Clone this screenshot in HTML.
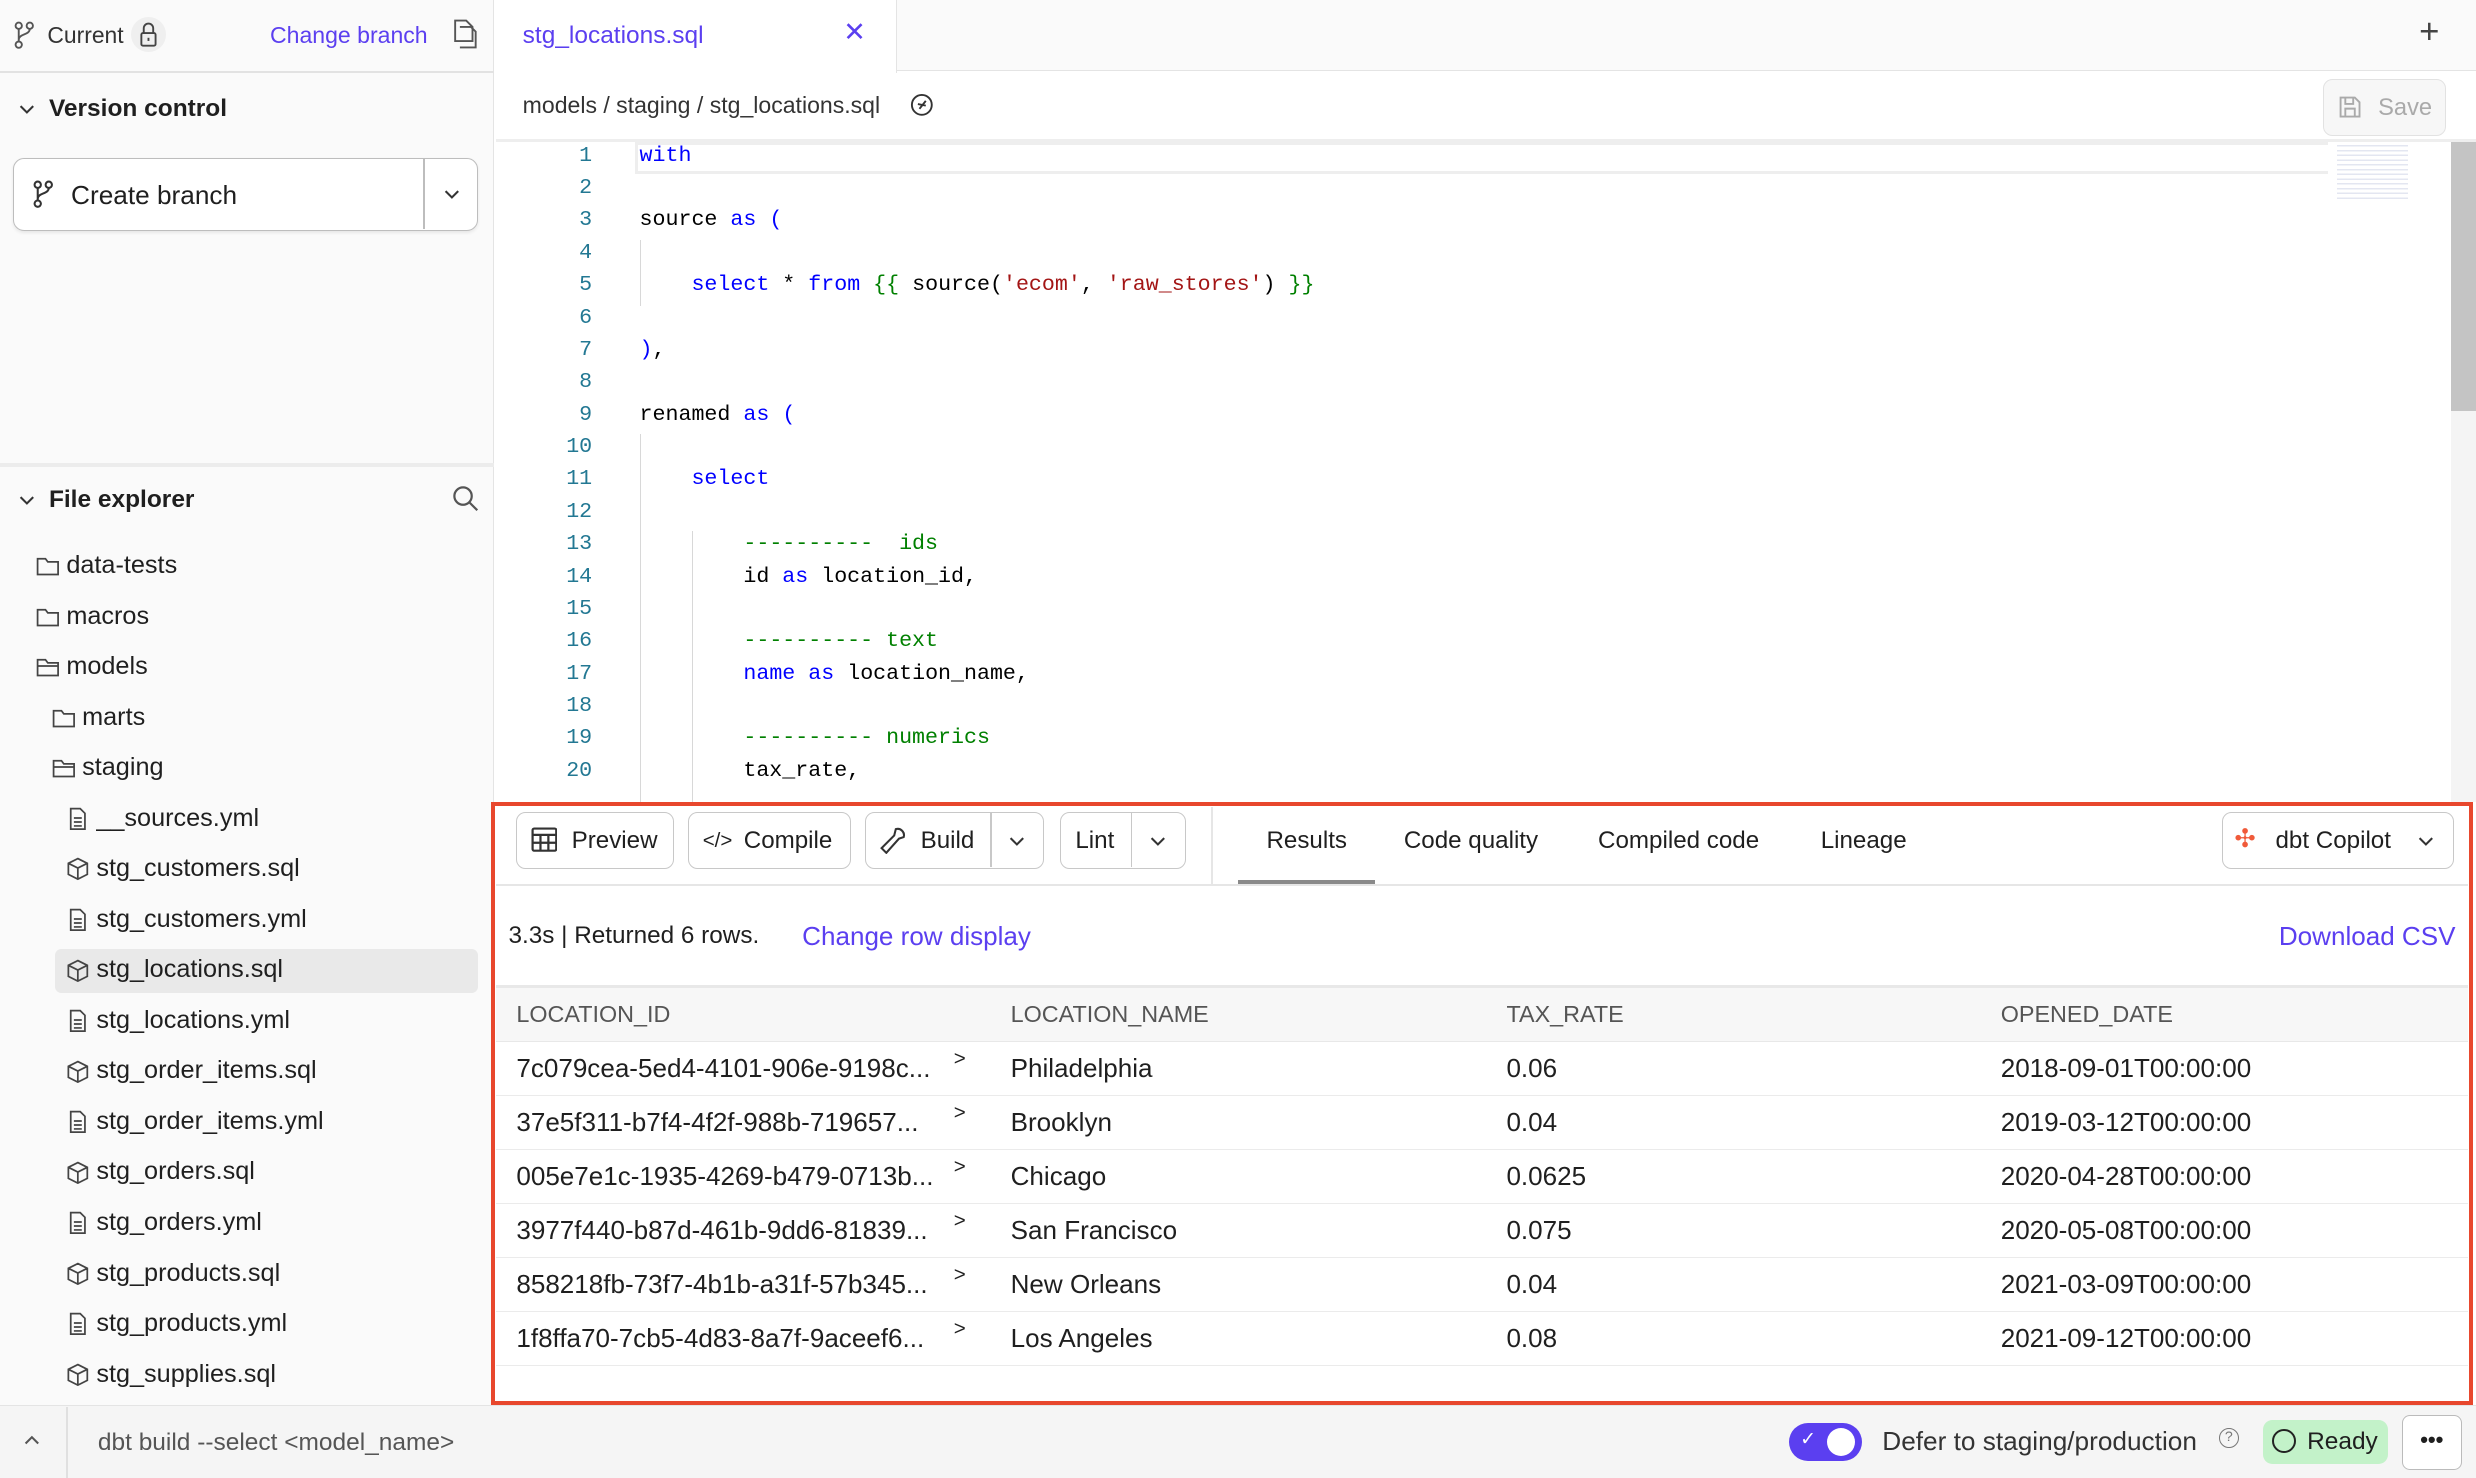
<!DOCTYPE html>
<html><head><meta charset="utf-8"><style>
*{box-sizing:border-box;margin:0;padding:0}
html,body{width:2476px;height:1478px;overflow:hidden;background:#fff}
#w{zoom:1.5791;width:1568px;height:936px;position:relative;font-family:"Liberation Sans",sans-serif;color:#1f1f1f;font-size:14px}
.a{position:absolute;white-space:nowrap}
.p{color:#5b3ff0}
.ln{position:absolute;width:375px;text-align:right;left:0;color:#237893;font-family:"Liberation Mono",monospace;font-size:13.7px}
.cd{position:absolute;left:405px;font-family:"Liberation Mono",monospace;font-size:13.7px;white-space:pre;color:#000}
.k{color:#0000ff}.s{color:#a31515}.c{color:#008000}
.btn{position:absolute;border:1px solid #c8c8c8;border-radius:6px;background:#fff;height:36px;top:514px}
.ti{position:absolute;font-size:15.3px;white-space:nowrap}
.row{position:absolute;left:314px;width:1249px;height:34px;border-bottom:1px solid #ebebeb}
.row span{position:absolute;top:7px;font-size:16.5px;white-space:nowrap}
</style></head><body><div id="w">
<div class="a" style="left:0;top:0;width:313px;height:890px;background:#fafafa;border-right:1px solid #e4e4e4"></div>
<div class="a" style="left:0;top:45px;width:313px;height:1px;background:#e2e2e2"></div>
<svg class="a" style="left:9px;top:13px" width="14" height="18" viewBox="0 0 14 18" fill="none" stroke="#555" stroke-width="1.2"><circle cx="3" cy="3" r="2"/><circle cx="10" cy="3" r="2"/><circle cx="3" cy="15" r="2"/><path d="M3 5v8M10 5c0 4-7 3-7 7"/></svg>
<div class="a" style="left:30px;top:14px;font-size:14.5px;color:#333">Current</div>
<div class="a" style="left:83px;top:11px;width:22px;height:22px;border-radius:11px;background:#efefef"></div>
<svg class="a" style="left:88px;top:14px" width="12" height="16" viewBox="0 0 12 16" fill="none" stroke="#444" stroke-width="1.2"><path d="M3 7V4a3 3 0 0 1 6 0v3"/><rect x="1.5" y="7" width="9" height="8" rx="1"/><path d="M6 10v2"/></svg>
<div class="a p" style="left:171px;top:14px;font-size:14.6px">Change branch</div>
<svg class="a" style="left:286px;top:12px" width="16" height="19" viewBox="0 0 16 19" fill="none" stroke="#555" stroke-width="1.2"><path d="M2 1h7l4 4v9H2z"/><path d="M5 5h7l3 3v10H5"/></svg>
<svg class="a" style="left:12px;top:65px" width="10" height="8" viewBox="0 0 10 8" fill="none" stroke="#333" stroke-width="1.3"><path d="M1 2l4 4 4-4"/></svg>
<div class="a" style="left:31px;top:60px;font-size:15.5px;font-weight:bold">Version control</div>
<div class="a" style="left:8px;top:100px;width:295px;height:46px;border:1px solid #bdbdbd;border-radius:7px;background:#fff;box-shadow:0 1px 2px rgba(0,0,0,.08)"></div>
<div class="a" style="left:268px;top:101px;width:1px;height:44px;background:#bdbdbd"></div>
<svg class="a" style="left:21px;top:114px" width="14" height="18" viewBox="0 0 14 18" fill="none" stroke="#333" stroke-width="1.3"><circle cx="3" cy="3" r="2"/><circle cx="10" cy="3" r="2"/><circle cx="3" cy="15" r="2"/><path d="M3 5v8M10 5c0 4-7 3-7 7"/></svg>
<div class="a" style="left:45px;top:114px;font-size:16.6px">Create branch</div>
<svg class="a" style="left:281px;top:119px" width="10" height="8" viewBox="0 0 10 8" fill="none" stroke="#333" stroke-width="1.3"><path d="M1 2l4 4 4-4"/></svg>
<div class="a" style="left:0;top:293px;width:313px;height:3px;background:#ececec"></div>
<svg class="a" style="left:12px;top:313px" width="10" height="8" viewBox="0 0 10 8" fill="none" stroke="#333" stroke-width="1.3"><path d="M1 2l4 4 4-4"/></svg>
<div class="a" style="left:31px;top:308px;font-size:15.5px;font-weight:bold">File explorer</div>
<svg class="a" style="left:286px;top:307px" width="17" height="17" viewBox="0 0 17 17" fill="none" stroke="#555" stroke-width="1.4"><circle cx="7" cy="7" r="5.5"/><path d="M11 11l5 5"/></svg>
<div class="a" style="left:35px;top:601px;width:268px;height:28px;background:#e9e9e9;border-radius:4px"></div>
<div id="tree"></div>
<div class="a" style="left:314px;top:0;width:1254px;height:45px;background:#fafafa;border-bottom:1px solid #e4e4e4"></div>
<div class="a" style="left:314px;top:0;width:254px;height:46px;background:#fff;border-right:1px solid #e4e4e4"></div>
<div class="a p" style="left:331px;top:14px;font-size:15.5px">stg_locations.sql</div>
<div class="a p" style="left:534px;top:11px;font-size:17px">✕</div>
<div class="a" style="left:1532px;top:8px;font-size:22px;color:#444">+</div>
<div class="a" style="left:331px;top:58px;font-size:14.6px;color:#333">models / staging / stg_locations.sql</div>
<svg class="a" style="left:576px;top:59px" width="15" height="15" viewBox="0 0 15 15" fill="none" stroke="#333" stroke-width="1.2"><circle cx="7.5" cy="7.5" r="6.3"/><path d="M10 5l-4 5M5 7l5 1"/></svg>
<div class="a" style="left:1471px;top:50px;width:78px;height:36px;border:1px solid #e2e2e2;border-radius:6px;background:#f7f7f7"></div>
<svg class="a" style="left:1481px;top:61px" width="14" height="14" viewBox="0 0 14 14" fill="none" stroke="#aaa" stroke-width="1.2"><path d="M1 1h9l3 3v9H1z"/><path d="M4 1v4h5V1M4 13V8h6v5"/></svg>
<div class="a" style="left:1506px;top:60px;font-size:15px;color:#aaa">Save</div>
<div class="a" style="left:314px;top:88px;width:1254px;height:2px;background:#eee"></div>
<div class="a" style="left:402px;top:90px;width:1072px;height:20px;border:2px solid #eee;border-right:none"></div>
<div class="a" style="left:1480px;top:90px;width:45px;height:38px;background:repeating-linear-gradient(#fff 0 2px,#d0d6e8 2px 3px);opacity:.6"></div>
<div class="a" style="left:1552px;top:90px;width:16px;height:418px;background:#f4f4f4"></div>
<div class="a" style="left:1552px;top:90px;width:16px;height:170px;background:#c4c4c4"></div>
<div class="a" style="left:405px;top:152px;width:1px;height:42px;background:#d8d8d8"></div>
<div class="a" style="left:405px;top:275px;width:1px;height:233px;background:#d8d8d8"></div>
<div class="a" style="left:438px;top:336px;width:1px;height:172px;background:#d8d8d8"></div>
<div id="code"></div>
<div class="a" style="left:311px;top:508px;width:1255px;height:382px;border:3px solid #e8472d;background:#fff"></div>
<div class="btn" style="left:327px;width:100px"></div>
<svg class="a" style="left:336px;top:524px" width="17" height="16" viewBox="0 0 17 16" fill="none" stroke="#333" stroke-width="1.4"><rect x="1" y="1" width="15" height="14" rx="1"/><path d="M1 5h15M1 10h15M6 5v10M11 5v10"/></svg>
<div class="ti" style="left:362px;top:524px">Preview</div>
<div class="btn" style="left:436px;width:103px"></div>
<div class="ti" style="left:445px;top:525px;font-size:13px">&lt;/&gt;</div>
<div class="ti" style="left:471px;top:524px">Compile</div>
<div class="btn" style="left:548px;width:113px"></div>
<div class="a" style="left:627px;top:515px;width:1px;height:34px;background:#c8c8c8"></div>
<svg class="a" style="left:557px;top:523px" width="17" height="18" viewBox="0 0 17 18" fill="none" stroke="#333" stroke-width="1.3"><path d="M10 2a4 4 0 0 1 5 5l-3 1-8 9-3-3 8-8z"/></svg>
<div class="ti" style="left:583px;top:524px">Build</div>
<svg class="a" style="left:639px;top:529px" width="10" height="8" viewBox="0 0 10 8" fill="none" stroke="#333" stroke-width="1.3"><path d="M1 2l4 4 4-4"/></svg>
<div class="btn" style="left:671px;width:80px"></div>
<div class="a" style="left:716px;top:515px;width:1px;height:34px;background:#c8c8c8"></div>
<div class="ti" style="left:681px;top:524px">Lint</div>
<svg class="a" style="left:728px;top:529px" width="10" height="8" viewBox="0 0 10 8" fill="none" stroke="#333" stroke-width="1.3"><path d="M1 2l4 4 4-4"/></svg>
<div class="a" style="left:767px;top:511px;width:1px;height:49px;background:#e6e6e6"></div>
<div class="ti" style="left:802px;top:524px">Results</div>
<div class="a" style="left:784px;top:557px;width:87px;height:3px;background:#8a8a8a"></div>
<div class="ti" style="left:889px;top:524px">Code quality</div>
<div class="ti" style="left:1012px;top:524px">Compiled code</div>
<div class="ti" style="left:1153px;top:524px">Lineage</div>
<div class="btn" style="left:1407px;width:147px"></div>
<div class="ti" style="left:1415px;top:522px;color:#f05a3a;font-size:16px">✣</div>
<div class="ti" style="left:1441px;top:524px">dbt Copilot</div>
<svg class="a" style="left:1531px;top:529px" width="10" height="8" viewBox="0 0 10 8" fill="none" stroke="#333" stroke-width="1.3"><path d="M1 2l4 4 4-4"/></svg>
<div class="a" style="left:314px;top:560px;width:1249px;height:1px;background:#e6e6e6"></div>
<div class="a" style="left:322px;top:584px;font-size:15.4px">3.3s | Returned 6 rows.</div>
<div class="a p" style="left:508px;top:583px;font-size:16.5px">Change row display</div>
<div class="a p" style="right:13px;top:583px;font-size:16.5px">Download CSV</div>
<div class="a" style="left:314px;top:624px;width:1249px;height:36px;background:#f7f7f7;border-top:2px solid #e8e8e8;border-bottom:1px solid #e8e8e8"></div>
<div class="a" style="left:327px;top:634px;font-size:14.8px;color:#555">LOCATION_ID</div>
<div class="a" style="left:640px;top:634px;font-size:14.8px;color:#555">LOCATION_NAME</div>
<div class="a" style="left:954px;top:634px;font-size:14.8px;color:#555">TAX_RATE</div>
<div class="a" style="left:1267px;top:634px;font-size:14.8px;color:#555">OPENED_DATE</div>
<div id="rows"></div>
<div class="a" style="left:0;top:890px;width:1568px;height:46px;background:#f5f5f5;border-top:1px solid #e4e4e4"></div>
<svg class="a" style="left:15px;top:908px" width="10" height="8" viewBox="0 0 10 8" fill="none" stroke="#555" stroke-width="1.3"><path d="M1 6l4-4 4 4"/></svg>
<div class="a" style="left:42px;top:891px;width:1px;height:45px;background:#e0e0e0"></div>
<div class="a" style="left:62px;top:905px;font-size:15.5px;color:#555">dbt build --select &lt;model_name&gt;</div>
<div class="a" style="left:1133px;top:901px;width:46px;height:24px;border-radius:12px;background:#5b3ff0"></div>
<div class="a" style="left:1157px;top:904px;width:18px;height:18px;border-radius:9px;background:#fff"></div>
<div class="a" style="left:1140px;top:904px;color:#fff;font-size:12px">✓</div>
<div class="a" style="left:1192px;top:903px;font-size:16.6px;color:#333">Defer to staging/production</div>
<div class="a" style="left:1405px;top:904px;width:13px;height:13px;border:1px solid #777;border-radius:7px;font-size:9px;text-align:center;color:#777;line-height:11px">?</div>
<div class="a" style="left:1433px;top:899px;width:79px;height:28px;border-radius:6px;background:#c3f2c9"></div>
<div class="a" style="left:1439px;top:905px;width:15px;height:15px;border:1.5px solid #222;border-radius:8px"></div>
<div class="a" style="left:1461px;top:904px;font-size:15.5px">Ready</div>
<div class="a" style="left:1521px;top:896px;width:38px;height:35px;border:1px solid #bbb;border-radius:5px;background:#fff;text-align:center;font-weight:bold;line-height:30px;font-size:14px">•••</div>
</div>
<script>
var t=[["data-tests",23,359,"f"],["macros",23,391,"f"],["models",23,423,"o"],["marts",33,455,"f"],["staging",33,487,"o"],["__sources.yml",42,519,"d"],["stg_customers.sql",42,551,"c"],["stg_customers.yml",42,583,"d"],["stg_locations.sql",42,615,"c"],["stg_locations.yml",42,647,"d"],["stg_order_items.sql",42,679,"c"],["stg_order_items.yml",42,711,"d"],["stg_orders.sql",42,743,"c"],["stg_orders.yml",42,775,"d"],["stg_products.sql",42,807,"c"],["stg_products.yml",42,839,"d"],["stg_supplies.sql",42,871,"c"]];
var ic={f:'<path d="M1 3h5l1.5 2H14v8H1z"/>',o:'<path d="M1 3h5l1.5 2H14v8H1zM1 7h13"/>',d:'<path d="M3 1h6l3 3v10H3zM5 7h5M5 9.5h5M5 12h5"/>',c:'<path d="M7.5 1l6 3v7l-6 3-6-3V4zM1.5 4l6 3 6-3M7.5 7v7"/>'};
var h="";t.forEach(function(e){h+='<svg class="a" style="left:'+e[1]+'px;top:'+(e[2]-8)+'px" width="15" height="15" viewBox="0 0 15 15" fill="none" stroke="#444" stroke-width="1.1">'+ic[e[3]]+'</svg><div class="a" style="left:'+(e[1]+19)+'px;top:'+(e[2]-10)+'px;font-size:16px">'+e[0]+'</div>';});
document.getElementById("tree").outerHTML=h;
var L=['<span class="k">with</span>','','source <span class="k">as</span> <span class="k">(</span>','','    <span class="k">select</span> * <span class="k">from</span> <span class="c">{{</span> source(<span class="s">\'ecom\'</span>, <span class="s">\'raw_stores\'</span>) <span class="c">}}</span>','','<span class="k">)</span>,','','renamed <span class="k">as</span> <span class="k">(</span>','','    <span class="k">select</span>','','        <span class="c">----------  ids</span>','        id <span class="k">as</span> location_id,','','        <span class="c">---------- text</span>','        <span class="k">name</span> <span class="k">as</span> location_name,','','        <span class="c">---------- numerics</span>','        tax_rate,'];
h="";L.forEach(function(s,i){var y=91+i*20.5;h+='<div class="ln" style="top:'+y+'px">'+(i+1)+'</div><div class="cd" style="top:'+y+'px">'+s+'</div>';});
document.getElementById("code").outerHTML=h;
var R=[["7c079cea-5ed4-4101-906e-9198c...","Philadelphia","0.06","2018-09-01T00:00:00"],["37e5f311-b7f4-4f2f-988b-719657...","Brooklyn","0.04","2019-03-12T00:00:00"],["005e7e1c-1935-4269-b479-0713b...","Chicago","0.0625","2020-04-28T00:00:00"],["3977f440-b87d-461b-9dd6-81839...","San Francisco","0.075","2020-05-08T00:00:00"],["858218fb-73f7-4b1b-a31f-57b345...","New Orleans","0.04","2021-03-09T00:00:00"],["1f8ffa70-7cb5-4d83-8a7f-9aceef6...","Los Angeles","0.08","2021-09-12T00:00:00"]];
h="";R.forEach(function(r,i){h+='<div class="row" style="top:'+(660+i*34.2)+'px"><span style="left:13px">'+r[0]+'</span><span style="left:290px;top:3px;font-size:13px">&gt;</span><span style="left:326px">'+r[1]+'</span><span style="left:640px">'+r[2]+'</span><span style="left:953px">'+r[3]+'</span></div>';});
document.getElementById("rows").outerHTML=h;
</script>
</body></html>
